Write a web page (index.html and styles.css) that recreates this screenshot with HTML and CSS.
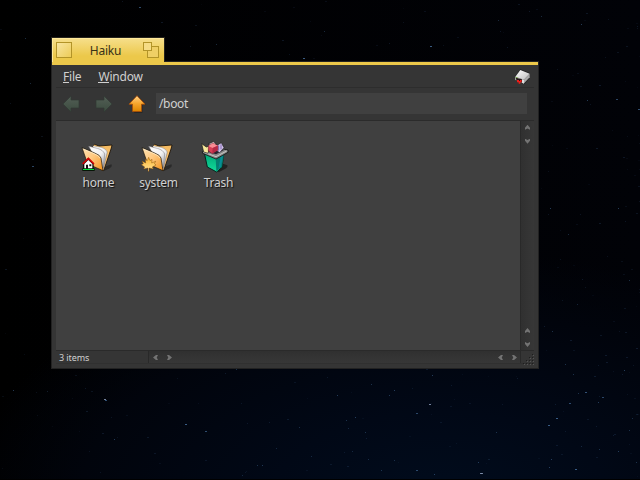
FILE: index.html
```html
<!DOCTYPE html>
<html lang="en">
<head>
<meta charset="utf-8">
<title>Haiku</title>
<link rel="stylesheet" href="styles.css">
</head>
<body>
<svg class="sky" id="sky" width="640" height="480" aria-hidden="true"></svg>
<svg class="defs" width="0" height="0" aria-hidden="true">
  <defs>
    <linearGradient id="front" x1="0" y1="0" x2="1" y2="1"><stop offset="0" stop-color="#ffe5b5"/><stop offset=".45" stop-color="#ffc981"/><stop offset="1" stop-color="#f39119"/></linearGradient>
    <linearGradient id="back" x1="0" y1="0" x2="0" y2="1"><stop offset="0" stop-color="#f2b95f"/><stop offset="1" stop-color="#ffc983"/></linearGradient>
    <linearGradient id="paper" x1="0" y1="0" x2="1" y2="1"><stop offset="0" stop-color="#fff"/><stop offset=".55" stop-color="#f1f1f3"/><stop offset="1" stop-color="#999ba3"/></linearGradient>
    <linearGradient id="up" x1="0" y1="0" x2="0" y2="1"><stop offset="0" stop-color="#ffd38a"/><stop offset=".5" stop-color="#f7a62d"/><stop offset="1" stop-color="#dd8500"/></linearGradient>
    <linearGradient id="off" x1="0" y1="0" x2="0" y2="1"><stop offset="0" stop-color="#535f56"/><stop offset="1" stop-color="#3b4b3f"/></linearGradient>
    <linearGradient id="leaf" x1="0" y1="0" x2="0" y2="1"><stop offset="0" stop-color="#ffb52b"/><stop offset="1" stop-color="#ffe39b"/></linearGradient>
    <linearGradient id="bin" x1="0" y1="0" x2="0" y2="1"><stop offset="0" stop-color="#00a575"/><stop offset="1" stop-color="#12dc9c"/></linearGradient>
    <linearGradient id="disk" x1="0" y1="0" x2="1" y2="1"><stop offset="0" stop-color="#fff"/><stop offset="1" stop-color="#bcbcbc"/></linearGradient>
    <g id="folder">
      <path d="M96 113L124 103Q128 110 119 115L101 123Z" fill="#242424" opacity=".8"/>
      <path d="M70 46L74 43L87 48L126 45L124 54L101 122L94 119L60 60Z" fill="url(#back)" stroke="#171008" stroke-width="2.5" stroke-linejoin="round"/>
      <path d="M68 47L94 52Q107 55 112 66L101 112H92Z" fill="url(#paper)" stroke="#55504a" stroke-width="1"/>
      <path d="M56 49L82 55Q100 60 104 72L100 116L90 108Z" fill="url(#paper)" stroke="#77747a" stroke-width="1.5"/>
      <path d="M36 53L72 68Q91 75 93 84L99 122L53 102Z" fill="url(#front)" stroke="#171008" stroke-width="2" stroke-linejoin="round"/>
      <path d="M40 57L72 71Q88 77 90 85" fill="none" stroke="#fff0cf" stroke-width="2"/>
    </g>
  </defs>
</svg>

<main class="window">
  <header class="tab">
    <span class="close"></span>
    <h1 class="title">Haiku</h1>
    <svg class="zoom" width="17" height="17" viewBox="0 0 17 17">
      <rect x="4.5" y="4.5" width="11" height="11" fill="#efcf65" stroke="#b39428"/>
      <rect x=".5" y=".5" width="8" height="8" fill="#f5dc85" stroke="#b39428"/>
    </svg>
  </header>
  <div class="frame">
    <nav class="menubar">
      <span><u>F</u>ile</span>
      <span><u>W</u>indow</span>
      <svg class="disk" width="18" height="18" viewBox="102 39 54 54">
        <path d="M121 43L150 54V68L133 88L105 76V65Z" fill="#202020"/>
        <path d="M121 45L149 56L132 74L106 65Z" fill="url(#disk)"/>
        <path d="M149 56V67L131 86V74Z" fill="#aaa"/>
        <path d="M106 65L132 74V86L106 75Z" fill="#ddd"/>
        <path d="M108 68L126 73V83L109 77Z" fill="#251515"/>
        <path d="M111 75h6v3h3v-3h5v7h-4v4h-5v-4h-5z" fill="#ed1c18"/>
        <path d="M107 66h5v3h-5z" fill="#78b448"/>
      </svg>
    </nav>
    <div class="toolbar">
      <svg class="nav" width="18" height="18" viewBox="0 0 18 18"><path d="M1 9L9 1V5H17V13H9V17Z" fill="url(#off)" stroke="#303a33" stroke-width=".7"/></svg>
      <svg class="nav" width="18" height="18" viewBox="0 0 18 18"><path d="M17 9L9 1V5H1V13H9V17Z" fill="url(#off)" stroke="#303a33" stroke-width=".7"/></svg>
      <svg class="nav" width="18" height="18" viewBox="0 0 18 18"><path d="M10 1L18 10H14.500V18H6Z" fill="#222" opacity=".7"/><path d="M9 .7L17 9.200H13.500V16.500H4.500V9.200H1Z" fill="url(#up)" stroke="#a94e08" stroke-width=".8"/></svg>
      <div class="path">/boot</div>
    </div>
    <div class="body">
      <section class="files">
        <figure class="file">
          <svg width="32" height="32" viewBox="33 33 96 96">
            <use href="#folder"/>
            <path d="M39 100L55 83L71 100V118H39Z" fill="#130c0a"/>
            <path d="M43 102L55 90L67 102V116H43Z" fill="#fff"/>
            <path d="M38 102L55 85L72 102" fill="none" stroke="#d40000" stroke-width="5"/>
            <path d="M48 116V104h6v12M58 103h6v6h-6z" fill="#111"/>
            <path d="M37 115h37v8H37z" fill="#071507"/><path d="M39 117h33v3H39z" fill="#00e63c"/>
          </svg>
          <figcaption>home</figcaption>
        </figure>
        <figure class="file">
          <svg width="32" height="32" viewBox="33 33 96 96">
            <use href="#folder"/>
            <path d="M56 82L60 92L66 88L65 99L77 94L73 101L78 105L67 111L70 117L57 114V124H54V114L41 117L44 111L34 104L40 101L36 93L47 99L46 88L52 92Z" fill="url(#leaf)" stroke="#7c4300" stroke-width="1.300"/>
          </svg>
          <figcaption>system</figcaption>
        </figure>
        <figure class="file">
          <svg width="32" height="32" viewBox="186 33 96 96">
            <path d="M235 123L252 101L265 106Q268 111 259 116L239 127Z" fill="#222"/>
            <path d="M196 69L254 74L249 112L233 126L205 111Z" fill="url(#bin)" stroke="#07231c" stroke-width="3"/>
            <path d="M230 83L255 71L249 110L232 124Z" fill="#047e70"/>
            <path d="M246 76L252 74L246 109L238 116Z" fill="#078d96"/>
            <path d="M190 65L217 50L267 60V67L231 87L191 70Z" fill="#888" stroke="#151515" stroke-width="2.500"/>
            <path d="M193 66L231 80L263 63" fill="none" stroke="#c7c7c7" stroke-width="3"/>
            <path d="M200 63L220 53L255 60L231 73Z" fill="#292632"/>
            <path d="M188 41L202 51L213 47L207 70L194 66Z" fill="#f7e99b" stroke="#171717" stroke-width="2"/>
            <path d="M207 42L224 34L232 43L222 51Z" fill="#bba7a9" stroke="#171717" stroke-width="2"/>
            <path d="M232 47L247 38L255 53L242 68L231 61Z" fill="#d3c5ea" stroke="#222" stroke-width="2"/>
            <path d="M239 46v16M246 43v15" stroke="#8267b1" stroke-width="3"/>
            <path d="M208 48L222 40L236 47V61L220 71L208 63Z" fill="#d73f56" stroke="#641629" stroke-width="1.500"/>
            <path d="M208 48L222 40L236 47L221 54Z" fill="#f98c94"/><path d="M221 54L236 47V61L220 70Z" fill="#b52945"/>
          </svg>
          <figcaption>Trash</figcaption>
        </figure>
      </section>
      <div class="vscroll">
        <div class="pair"><i class="up"></i><i class="down"></i></div>
        <div class="pair"><i class="up"></i><i class="down"></i></div>
      </div>
    </div>
    <footer class="status">
      <div class="count">3 items</div>
      <div class="hscroll">
        <div class="pair"><i class="left"></i><i class="right"></i></div>
        <div class="pair"><i class="left"></i><i class="right"></i></div>
      </div>
      <svg class="grip" width="13" height="16" viewBox="0 0 13 16" id="grip"></svg>
    </footer>
  </div>
</main>
<script src="script.js"></script>
</body>
</html>
```
FILE: styles.css
```css
* { box-sizing: border-box; }
body {
  margin: 0;
  width: 640px;
  height: 480px;
  overflow: hidden;
  padding: 37px 0 0 51px;
  background: radial-gradient(ellipse 480px 250px at 440px 500px, #010c1d 0%, #010816 35%, #01040c 75%, transparent 100%), linear-gradient(90deg, #000, #010207);
  font: 12px/16px "Noto Sans", sans-serif;
  letter-spacing: -.2px;
  color: #d0d0d0;
}
.sky { position: absolute; left: 0; top: 0; z-index: -1; }
.defs { position: absolute; }
.window { width: 488px; }
.tab {
  display: flex;
  align-items: flex-start;
  position: relative;
  width: 114px;
  height: 25px;
  padding: 4px 4px 0 4px;
  border: 1px solid #25231c;
  border-bottom: 0;
  background: linear-gradient(#f6df8c, #ecc84a 75%);
  box-shadow: inset 1px 1px #ffe99a;
}
.close { width: 16px; height: 16px; border: 1px solid #b39428; background: linear-gradient(135deg, #f8e5a0, #edcc58); }
.title { margin: 0; flex: 1; padding-right: 4px; text-align: center; font-size: 12px; font-weight: 400; line-height: 17px; color: #383217; }
.zoom { display: block; }
.frame {
  display: flex;
  flex-direction: column;
  height: 308px;
  margin-top: -1px;
  padding: 3px 4px 4px;
  border: 1px solid #222;
  background: linear-gradient(#ecc84a 0 3px, #353535 3px);
}
.menubar { display: flex; align-items: center; gap: 17px; height: 23px; padding: 2px 2px 0 7px; border-bottom: 1px solid #2d2d2d; }
.menubar u { text-decoration: none; box-shadow: 0 -1px inset #d0d0d0; display: inline-block; height: 14px; line-height: 15px; }
.disk { margin-left: auto; }
.toolbar { display: flex; align-items: center; height: 33px; padding: 0 7px 0 6px; border-bottom: 1px solid #2b2b2b; gap: 15px; }
.nav { flex: none; }
.path { flex: 1; height: 21px; margin-left: -5px; padding: 0 3px; line-height: 21px; letter-spacing: -.35px; background: #404040; }
.body { display: flex; height: 230px; }
.files { display: flex; align-items: flex-start; flex: 1; padding: 20px 0 0 12px; background: #404040; }
.file { display: flex; flex-direction: column; align-items: center; width: 60px; margin: 0; }
.file svg { display: block; margin-right: 2px; }
.file figcaption { padding: 1px 0 0 1px; text-shadow: 1px 1px 1px #111; line-height: 18px; }
.vscroll { display: flex; flex-direction: column; justify-content: space-between; width: 14px; border-left: 1px solid #292929; background: linear-gradient(90deg, #303030, #373737); padding: 4px 0 3px 4px; }
.vscroll .pair { display: flex; flex-direction: column; gap: 9px; }
.pair i { display: block; width: 5px; height: 5px; background: #737373; }
.up { clip-path: polygon(50% 0, 100% 60%, 100% 100%, 50% 75%, 0 100%, 0 60%); }
.down { clip-path: polygon(0 0, 50% 25%, 100% 0, 100% 40%, 50% 100%, 0 40%); }
.left { clip-path: polygon(0 50%, 60% 0, 100% 0, 75% 50%, 100% 100%, 60% 100%); }
.right { clip-path: polygon(0 0, 40% 0, 100% 50%, 40% 100%, 0 100%, 25% 50%); }
.status { display: flex; height: 14px; border-top: 1px solid #2a2a2a; border-bottom: 1px solid #303030; }
.count { width: 93px; padding-left: 3px; border-right: 1px solid #292929; font-size: 9px; line-height: 14px; letter-spacing: -.1px; }
.hscroll { display: flex; justify-content: space-between; align-items: center; flex: 1; padding: 1px 3px 0 4px; background: linear-gradient(#303030, #373737); border-right: 1px solid #292929; }
.hscroll .pair { display: flex; gap: 9px; }
.grip { flex: none; }
```
FILE: script.js
```js
const NS = "http://www.w3.org/2000/svg";
function dot(parent, x, y, w, h, fill, opacity) {
  const r = document.createElementNS(NS, "rect");
  const values = { x, y, width: w, height: h, fill, opacity };
  for (const key in values) r.setAttribute(key, values[key]);
  parent.appendChild(r);
}
const sky = document.getElementById("sky");
// x, y, brightness
const stars = [
  [139,7,.65],[25,38,.4],[30,83,.35],[32,166,.6],[303,58,.8],[430,46,.8],[498,20,.35],
  [216,44,.35],[216,68,.5],[324,31,.35],[581,24,.5],[541,16,.35],[460,72,.45],[487,73,.55],
  [616,99,.6],[638,109,.7],[587,100,.5],[550,208,.5],[568,234,.35],[618,208,.5],[577,304,.3],
  [629,280,.4],[552,331,.4],[585,392,.7],[569,403,.65],[602,397,.6],[598,402,.5],[629,430,.4],
  [104,399,.9],[105,400,.7],[185,424,.8],[205,431,.65],[114,439,.5],[13,390,.5],[47,391,.25],
  [236,369,.4],[257,465,.4],[262,465,.45],[299,427,.35],[242,475,.3],[276,448,.3],[311,456,.3],
  [429,404,.9],[416,413,.6],[556,418,.8],[548,425,.8],[480,473,.9],[481,473,.9],[575,469,.8],
  [549,467,.5],[432,375,.5],[371,384,.4],[394,390,.5],[389,395,.45],[337,395,.5],[355,417,.5],
  [346,420,.4],[365,432,.4],[496,432,.4],[478,462,.5],[416,470,.6],[434,474,.5],[381,470,.4],
  [394,460,.35],[368,459,.35],[573,374,.4],[565,364,.4],[624,370,.5],[578,393,.4],[618,451,.5],
  [599,449,.4],[581,446,.3],[636,462,.4],[632,418,.35],[551,459,.5],[348,428,.3],[352,451,.3]
];
for (const [x, y, o] of stars) dot(sky, x, y, o > .5 ? 2 : 1, 1, o > .85 ? "#8190ad" : "#4772a1", o);
let seed = 73;
const rnd = () => (seed = (seed * 16807) % 2147483647) / 2147483647;
for (let i = 0; i < 330; i++) dot(sky, Math.floor((1 - rnd() ** 1.5) * 640), Math.floor(rnd() * 480), 1 + Math.floor(rnd() * 2), 1, "#314e76", .08 + rnd() * .22);
dot(sky, 0, 479, 640, 1, "#000", 1);
const grip = document.getElementById("grip");
for (let row = 0; row < 4; row++) for (let col = 3 - row; col < 4; col++) {
  dot(grip, 2 + col * 3, 3 + row * 3, 1, 1, "#1e1e1e", 1);
  dot(grip, 3 + col * 3, 4 + row * 3, 1, 1, "#555", 1);
}
```
